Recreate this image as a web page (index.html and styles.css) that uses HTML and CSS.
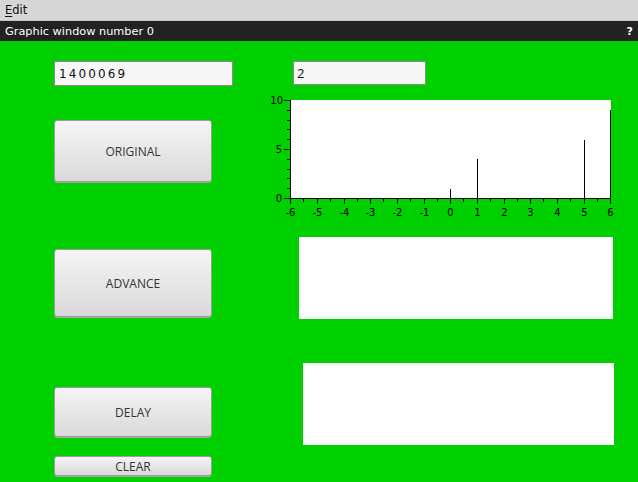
FILE: index.html
```html
<!DOCTYPE html>
<html>
<head>
<meta charset="utf-8">
<link rel="stylesheet" href="styles.css">
</head>
<body>
<div class="menubar"><span class="menu"><u>E</u>dit</span></div>
<div class="titlebar"><span class="title">Graphic window number 0</span><span class="help">?</span></div>
<div class="canvas">
  <div class="leftcol">
    <div class="field field-num">1400069</div>
    <div class="btn btn-original">ORIGINAL</div>
    <div class="btn btn-advance">ADVANCE</div>
    <div class="btn btn-delay">DELAY</div>
    <div class="btn btn-clear">CLEAR</div>
  </div>
  <div class="rightcol">
    <div class="field field-small">2</div>
    <svg class="chart" width="350" height="130" viewBox="0 0 350 130" xmlns="http://www.w3.org/2000/svg">
      <rect x="21" y="8" width="320" height="98.5" fill="#fff"/>
      <g stroke="#000" stroke-width="1" fill="none" shape-rendering="crispEdges">
        <line x1="20.5" y1="8" x2="20.5" y2="107"/>
        <line x1="20" y1="106.5" x2="341" y2="106.5"/>
        <line x1="14" y1="106.5" x2="20" y2="106.5"/>
        <line x1="14" y1="57.5" x2="20" y2="57.5"/>
        <line x1="14" y1="8.5" x2="20" y2="8.5"/>
        <line x1="17" y1="96.5" x2="20" y2="96.5"/>
        <line x1="17" y1="86.5" x2="20" y2="86.5"/>
        <line x1="17" y1="77.5" x2="20" y2="77.5"/>
        <line x1="17" y1="67.5" x2="20" y2="67.5"/>
        <line x1="17" y1="47.5" x2="20" y2="47.5"/>
        <line x1="17" y1="37.5" x2="20" y2="37.5"/>
        <line x1="17" y1="28.5" x2="20" y2="28.5"/>
        <line x1="17" y1="18.5" x2="20" y2="18.5"/>
        <line x1="20.5" y1="107" x2="20.5" y2="112"/>
        <line x1="47.5" y1="107" x2="47.5" y2="112"/>
        <line x1="74.5" y1="107" x2="74.5" y2="112"/>
        <line x1="100.5" y1="107" x2="100.5" y2="112"/>
        <line x1="127.5" y1="107" x2="127.5" y2="112"/>
        <line x1="154.5" y1="107" x2="154.5" y2="112"/>
        <line x1="180.5" y1="107" x2="180.5" y2="112"/>
        <line x1="207.5" y1="107" x2="207.5" y2="112"/>
        <line x1="234.5" y1="107" x2="234.5" y2="112"/>
        <line x1="260.5" y1="107" x2="260.5" y2="112"/>
        <line x1="287.5" y1="107" x2="287.5" y2="112"/>
        <line x1="314.5" y1="107" x2="314.5" y2="112"/>
        <line x1="340.5" y1="107" x2="340.5" y2="112"/>
        <line x1="33.5" y1="107" x2="33.5" y2="109.5"/>
        <line x1="60.5" y1="107" x2="60.5" y2="109.5"/>
        <line x1="87.5" y1="107" x2="87.5" y2="109.5"/>
        <line x1="113.5" y1="107" x2="113.5" y2="109.5"/>
        <line x1="140.5" y1="107" x2="140.5" y2="109.5"/>
        <line x1="167.5" y1="107" x2="167.5" y2="109.5"/>
        <line x1="193.5" y1="107" x2="193.5" y2="109.5"/>
        <line x1="220.5" y1="107" x2="220.5" y2="109.5"/>
        <line x1="247.5" y1="107" x2="247.5" y2="109.5"/>
        <line x1="273.5" y1="107" x2="273.5" y2="109.5"/>
        <line x1="300.5" y1="107" x2="300.5" y2="109.5"/>
        <line x1="327.5" y1="107" x2="327.5" y2="109.5"/>
        <line x1="180.5" y1="106.5" x2="180.5" y2="96.5"/>
        <line x1="207.5" y1="106.5" x2="207.5" y2="67"/>
        <line x1="314.5" y1="106.5" x2="314.5" y2="47.5"/>
        <line x1="340.5" y1="106.5" x2="340.5" y2="18"/>
      </g>
      <g class="ylab" text-anchor="end">
        <text x="13" y="11.5">10</text>
        <text x="12" y="60.5">5</text>
        <text x="12" y="109.5">0</text>
      </g>
      <g class="xlab" text-anchor="middle">
        <text x="20.5" y="124">-6</text>
        <text x="47.5" y="124">-5</text>
        <text x="74.5" y="124">-4</text>
        <text x="100.5" y="124">-3</text>
        <text x="127.5" y="124">-2</text>
        <text x="154.5" y="124">-1</text>
        <text x="180.5" y="124">0</text>
        <text x="207.5" y="124">1</text>
        <text x="234.5" y="124">2</text>
        <text x="260.5" y="124">3</text>
        <text x="287.5" y="124">4</text>
        <text x="314.5" y="124">5</text>
        <text x="340.5" y="124">6</text>
      </g>
    </svg>
    <div class="panel panel-a"></div>
    <div class="panel panel-b"></div>
  </div>
</div>
</body>
</html>
```
FILE: styles.css
```css
html, body {
  margin: 0;
  padding: 0;
  width: 638px;
  height: 482px;
  overflow: hidden;
  background: #00d000;
}
.menubar {
  height: 20px;
  background: #d6d6d6;
  border-bottom: 1px solid #c4c4c4;
  display: flex;
  align-items: center;
  padding-left: 5px;
}
.menu {
  font-family: "DejaVu Sans", sans-serif;
  font-size: 11.5px;
  color: #111;
}
.menu u {
  text-decoration-thickness: 1px;
  text-underline-offset: 2px;
}
.titlebar {
  height: 20px;
  background: #222222;
  display: flex;
  align-items: center;
  justify-content: space-between;
  padding: 0 5px;
  color: #fff;
  font-family: "DejaVu Sans", sans-serif;
  font-size: 11.3px;
}
.help {
  font-weight: bold;
  font-size: 11px;
}
.canvas {
  display: flex;
  height: 441px;
  background: #00d000;
}
.leftcol {
  display: flex;
  flex-direction: column;
  align-items: flex-start;
  margin-left: 54px;
  width: 179px;
  padding-top: 20px;
}
.rightcol {
  display: flex;
  flex-direction: column;
  align-items: flex-start;
  margin-left: 37px;
  padding-top: 20px;
}
.field {
  box-sizing: border-box;
  border: 1px solid #8c8c8c;
  background: #f7f7f7;
  display: flex;
  align-items: center;
  color: #111;
}
.field-num {
  width: 179px;
  height: 25px;
  padding-left: 4px;
  font-family: "DejaVu Sans", sans-serif;
  font-size: 12px;
  letter-spacing: 2.1px;
}
.field-small {
  width: 133px;
  height: 24px;
  margin-left: 23px;
  padding-left: 3px;
  font-family: "Open Sans", sans-serif;
  font-size: 13px;
}
.btn {
  box-sizing: border-box;
  width: 158px;
  border: 1px solid #9e9e9e;
  border-radius: 3px;
  background: linear-gradient(#f5f5f5, #d9d9d9);
  box-shadow: 0 1px 0 #a8a8a8;
  display: flex;
  align-items: center;
  justify-content: center;
  font-family: "Open Sans", sans-serif;
  font-size: 12px;
  color: #333;
}
.btn-original { margin-top: 34px; height: 62px; }
.btn-advance { margin-top: 67px; height: 68px; }
.btn-delay { margin-top: 70px; height: 50px; }
.btn-clear { margin-top: 19px; height: 20px; }
.chart {
  display: block;
  margin-top: 7px;
}
.chart text {
  font-family: "DejaVu Sans", sans-serif;
  font-size: 10px;
  fill: #000;
}
.panel {
  background: #fff;
  height: 82px;
}
.panel-a {
  margin-top: 15px;
  margin-left: 29px;
  width: 314px;
}
.panel-b {
  margin-top: 44px;
  margin-left: 33px;
  width: 311px;
}
```
